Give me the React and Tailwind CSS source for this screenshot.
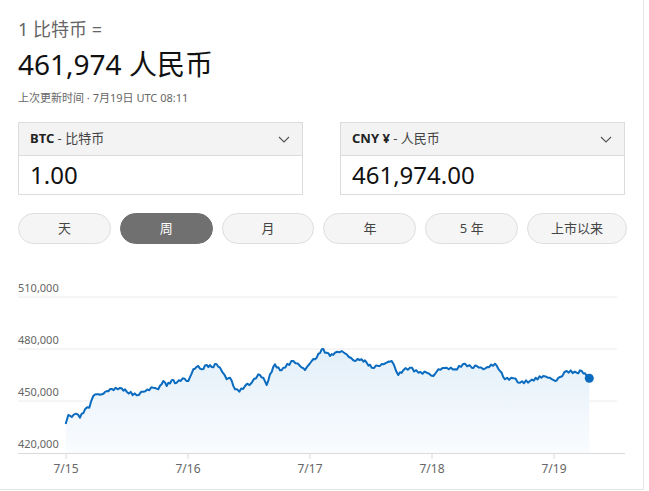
import React from 'react';

const FONT = { fontFamily: '"Noto Sans", "Noto Sans CJK SC", sans-serif' };

// 价格走势的大致轮廓（页面坐标）
const outline = [
  [65.7, 423], [68.3, 414], [71.7, 416], [76, 412.7], [80, 416.7], [85, 408.3], [89.3, 406.7],
  [93.3, 395], [96.7, 393.3], [101.7, 393.3], [106.7, 390], [111.7, 388], [121.7, 387.3],
  [126.7, 390.7], [136.7, 394.3], [143.3, 390.7], [153.3, 386.7], [158.3, 388.3], [163.3, 380],
  [166.7, 385], [171.7, 379.3], [176.7, 381.7], [182.7, 377.3], [188.3, 380], [193.3, 368.3],
  [198.3, 365], [201.7, 368.3], [206.7, 364], [211.7, 366], [216.7, 363.3], [220, 366.7],
  [226.7, 378.3], [230, 376.7], [235, 388.3], [239.3, 390.7], [245, 385], [251.7, 381.7],
  [258.3, 373.3], [263.3, 376.7], [266.7, 384], [270, 373.3], [275, 363.3], [280, 369.3],
  [283.3, 366.7], [293.3, 360], [300, 365], [305, 369], [311.7, 360], [316.7, 356.7],
  [321.7, 348.3], [326.7, 351.7], [330, 355], [335, 351.7], [341.7, 350], [346.7, 353.3],
  [353.3, 359.3], [361.7, 358.3], [366.7, 361.7], [371.7, 366.7], [378.3, 365], [383.3, 363.3],
  [386.7, 361.7], [391.7, 360], [398.3, 374], [403.3, 369.3], [410, 366.7], [418.3, 371.7],
  [426.7, 371.7], [433.3, 375], [438.3, 368.3], [446.7, 366.7], [455, 368.3], [465, 362.7],
  [471.7, 366.7], [476.7, 365], [483.3, 368.3], [495, 362.7], [500, 370], [505, 378.3],
  [513.3, 377.3], [520, 381.7], [530, 380], [543.3, 375], [550, 376.7], [555, 380], [560, 376],
  [566.7, 370], [576.7, 371.7], [581.7, 370], [586.7, 375], [589.3, 377.3],
];

// 在轮廓点之间加一点抖动，让折线看起来更像真实行情
const buildPoints = () => {
  const pts = [];
  for (let i = 0; i < outline.length - 1; i++) {
    const [x1, y1] = outline[i];
    const [x2, y2] = outline[i + 1];
    const steps = Math.max(1, Math.round((x2 - x1) / 2));
    for (let s = 0; s < steps; s++) {
      const t = s / steps;
      const jitter = s === 0 ? 0 : Math.sin(i * 12.9898 + s * 78.233) * 1.3;
      pts.push([x1 + (x2 - x1) * t, y1 + (y2 - y1) * t + jitter]);
    }
  }
  pts.push(outline[outline.length - 1]);
  return pts;
};

const points = buildPoints();
const linePath = points.map(([x, y], i) => `${i === 0 ? 'M' : 'L'}${x.toFixed(1)},${y.toFixed(1)}`).join(' ');
const areaPath = `${linePath} L589.3,452 L65.7,452 Z`;

const ranges = ['天', '周', '月', '年', '5 年', '上市以来'];

const Chevron = () => (
  <svg width="12" height="7" viewBox="0 0 12 7" fill="none">
    <polyline points="1,1 6,6 11,1" stroke="#555" strokeWidth="1.1" />
  </svg>
);

const CurrencyBox = ({ code, name, value }) => (
  <div className="w-[285px] border border-[#dcdcdc]">
    <div className="h-[33px] bg-[#f3f3f3] border-b border-[#dcdcdc] flex items-center justify-between pl-[11px] pr-[12px]">
      <span className="text-[13px] text-[#444]">
        <span className="font-bold text-[#222]">{code}</span> - {name}
      </span>
      <Chevron />
    </div>
    <div className="h-[38px] flex items-center pl-[11px] text-[24px] text-[#111]">{value}</div>
  </div>
);

const Chart = () => {
  const grid = [
    { y: 296, label: '510,000' },
    { y: 348, label: '480,000' },
    { y: 400, label: '450,000' },
  ];
  const days = [
    { x: 66, label: '7/15' },
    { x: 188, label: '7/16' },
    { x: 310, label: '7/17' },
    { x: 432, label: '7/18' },
    { x: 554, label: '7/19' },
  ];
  return (
    <svg className="block" width="644" height="246" viewBox="0 243 644 246" style={FONT}>
      <defs>
        <linearGradient id="area" x1="0" y1="345" x2="0" y2="452" gradientUnits="userSpaceOnUse">
          <stop offset="0" stopColor="#e2eff9" />
          <stop offset="1" stopColor="#fafcfe" />
        </linearGradient>
      </defs>
      {grid.map((g) => (
        <g key={g.label}>
          <line x1="18" x2="617" y1={g.y} y2={g.y} stroke="#ececec" strokeWidth="1" />
          <text x="18" y={g.y - 5} fontSize="11" fill="#666">{g.label}</text>
        </g>
      ))}
      <text x="18" y="447" fontSize="11" fill="#666">420,000</text>
      <path d={areaPath} fill="url(#area)" />
      <line x1="18" x2="625" y1="452.5" y2="452.5" stroke="#dadada" strokeWidth="1" />
      {days.map((d) => (
        <g key={d.label}>
          <line x1={d.x} x2={d.x} y1="453" y2="458" stroke="#dadada" strokeWidth="1" />
          <text x={d.x} y="472" fontSize="12" fill="#666" textAnchor="middle">{d.label}</text>
        </g>
      ))}
      <path d={linePath} fill="none" stroke="#0b6cbf" strokeWidth="2" strokeLinejoin="round" />
      <circle cx="589.3" cy="377.3" r="4.5" fill="#0b6cbf" />
    </svg>
  );
};

export default function App() {
  return (
    <div className="w-[644px] h-[490px] bg-white border-r border-b border-[#e6e6e6] overflow-hidden" style={FONT}>
      <div className="pl-[18px] pr-[16px]">
        <div className="pt-[17px] text-[18px] leading-[24px] text-[#666]">1 比特币 =</div>
        <div className="mt-[5px] text-[28px] leading-[36px] text-[#111]">461,974 人民币</div>
        <div className="mt-[8px] text-[11px] leading-[16px] text-[#666]">上次更新时间 · 7月19日 UTC 08:11</div>

        <div className="mt-[16px] flex gap-[37px]">
          <CurrencyBox code="BTC" name="比特币" value="1.00" />
          <CurrencyBox code="CNY ¥" name="人民币" value="461,974.00" />
        </div>

        <div className="mt-[18px] flex gap-[9px]">
          {ranges.map((r) => (
            <button
              key={r}
              className={`h-[31px] rounded-full text-[13px] ${r === '上市以来' ? 'w-[100px]' : 'w-[93px]'} ${
                r === '周'
                  ? 'bg-[#707070] text-white border border-[#707070]'
                  : 'bg-[#f5f5f5] text-[#444] border border-[#dedede]'
              }`}
            >
              {r}
            </button>
          ))}
        </div>
      </div>
      <Chart />
    </div>
  );
}
